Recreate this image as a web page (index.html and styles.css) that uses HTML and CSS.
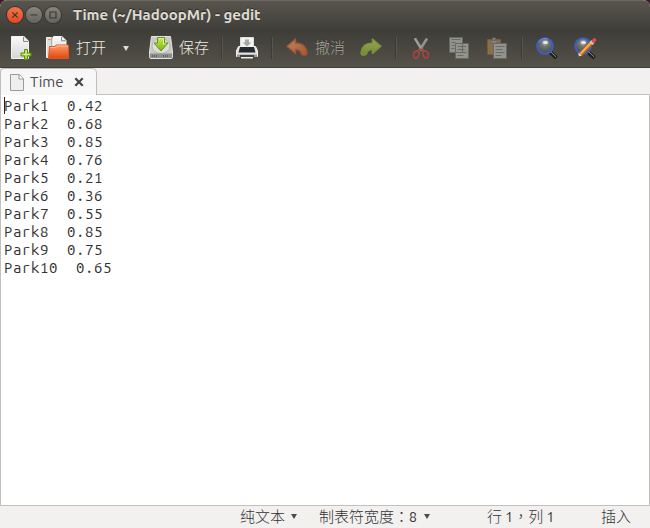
FILE: index.html
```
<!DOCTYPE html>
<html lang="zh-CN">
<head>
<meta charset="utf-8">
<title>Time (~/HadoopMr) - gedit</title>
<link rel="stylesheet" href="styles.css">
</head>
<body>
<svg class="defs" width="0" height="0">
  <defs>
    <linearGradient id="paper" x2="0" y2="1"><stop stop-color="#fafafa"/><stop offset="1" stop-color="#d5d5d3"/></linearGradient>
    <linearGradient id="folder" x2="0" y2="1"><stop stop-color="#f7a06c"/><stop offset=".45" stop-color="#f1763d"/><stop offset="1" stop-color="#df4711"/></linearGradient>
    <linearGradient id="green" x2="0" y2="1"><stop stop-color="#c9e95a"/><stop offset="1" stop-color="#79b414"/></linearGradient>
    <linearGradient id="undo" x2="1" y2="1"><stop stop-color="#b18a62"/><stop offset="1" stop-color="#ad5430"/></linearGradient>
    <linearGradient id="redo" x2="0" y2="1"><stop stop-color="#98a855"/><stop offset="1" stop-color="#708b32"/></linearGradient>
    <radialGradient id="lens" cx=".5" cy=".28" r=".75"><stop stop-color="#b8bbb9"/><stop offset=".35" stop-color="#70736f"/><stop offset="1" stop-color="#454a49"/></radialGradient>
  </defs>
</svg>
<div class="window">
  <header class="titlebar">
    <span class="control close"><svg viewBox="0 0 16 16"><path d="M5.3 5.3l5.4 5.4M10.7 5.3l-5.4 5.4"/></svg></span>
    <span class="control"><svg viewBox="0 0 16 16"><path d="M4.5 8h7"/></svg></span>
    <span class="control"><svg viewBox="0 0 16 16"><path d="M5 5h6v6H5z"/></svg></span>
    <h1>Time (~/HadoopMr) - gedit</h1>
  </header>
  <nav class="toolbar">
    <svg class="icon new" viewBox="0 0 24 24"><path d="M1.5.5h12.4l4.6 4.6v17.400h-17z" fill="url(#paper)" stroke="#f3f3f1"/><path d="M13.500.8v4.700h4.700" fill="#eee" stroke="#888"/><path d="M14.500 13.500h3v3.500h3.500v3h-3.500v3.500h-3v-3.500H11v-3h3.500z" fill="url(#green)" stroke="#5b8d13"/><path d="M16 14.500v8M12 18.500h8" stroke="#d9ed86"/></svg>
    <svg class="icon open" viewBox="0 0 28 24"><path d="M1.500 1.500h6v20h-6z" fill="#ddd" stroke="#f4f4f2"/><path d="M3 3.500h4" stroke="#f29b43"/><path d="M6.500 1.500h10v18h-10z" fill="#e5e5e3" stroke="#aaa"/><path d="M8.500.5h8.500l4 4v15H8.500z" fill="url(#paper)" stroke="#f5f5f3"/><path d="M16.500 .8v4h4.200" fill="none" stroke="#858585"/><path d="M4.500 10.500h5l2-1.500h12v13.500h-20z" fill="url(#folder)" stroke="#e4541b"/><path d="M5.300 11.500h4.900l2-1.500h10.500" fill="none" stroke="#ffc09a"/></svg>
    <span class="label">打开</span>
    <span class="drop"></span>
    <svg class="icon save" viewBox="0 0 26 24"><path d="M3.500.5h19l2 15.500v5q0 1.500-1.500 1.500H3q-1.500 0-1.500-1.500v-5z" fill="#c9c9c7" stroke="#e4e4e2"/><ellipse cx="13" cy="10" rx="9" ry="7.500" fill="#dededc" stroke="#b4b4b2"/><path d="M1.800 17.500h22.400v4.500H1.800z" fill="#8f8f8d"/><path d="M4 20h6M15 20h6" stroke="#555" stroke-width="1.500" stroke-dasharray="1 1"/><path d="M9.500 1.500h7V7H20l-7 8-7-8h3.500z" fill="url(#green)" stroke="#629316"/><path d="M10.500 2.500h5v5.500h2.200" fill="none" stroke="#dff094"/></svg>
    <span class="label">保存</span>
    <i class="separator s1"></i>
    <svg class="icon print" viewBox="0 0 24 24"><path d="M5.500 1.500h13v12h-13z" fill="#f3f3f1" stroke="#ddd"/><path d="M10 3.500h4v3h2.500L12 10.500 7.500 6.500H10z" fill="#a8a8a6"/><path d="M3.500 10.500h17l2 4v6h-21v-6z" fill="#e3e3e1" stroke="#f0f0ee"/><path d="M5 11h14l1.500 5.500h-17z" fill="#252b2f"/><path d="M2 18.500h20V21H2z" fill="#999"/><path d="M5 19h14v4H5z" fill="#44433e"/><path d="M6 21h12v1.500H6z" fill="#eee"/></svg>
    <i class="separator s2"></i>
    <svg class="icon undo" viewBox="0 0 24 24"><path d="M10.500 3v4q10 0 11.500 9.500 0 3-3 2.500-2.500 0-3-2.500-1-3-5.500-3v4L2 10.300z" fill="url(#undo)" stroke="#a35535" stroke-width="1.400" stroke-linejoin="round"/></svg>
    <span class="label muted">撤消</span>
    <svg class="icon redo" viewBox="0 0 24 24"><path d="M13.500 3v4Q3.500 7 2 16.500q0 3 3 2.500 2.500 0 3-2.500 1-3 5.500-3v4l8.500-7.200z" fill="url(#redo)" stroke="#7c9140" stroke-width="1.400" stroke-linejoin="round"/></svg>
    <i class="separator s3"></i>
    <svg class="icon cut" viewBox="0 0 24 24"><path d="M6 2.500l7.500 12M18 2.500l-7.500 12" stroke="#92928e" stroke-width="2.600"/><path d="M5.500 2l7 11.500" stroke="#b0b0aa" stroke-width=".8"/><path d="M12 13l-3 2q-4-.5-4.500 4 .3 3.500 3 3 3-1 2.500-6.500M12 13l3 2q4-.5 4.500 4-.3 3.500-3 3-3-1-2.500-6.500" fill="none" stroke="#9e4542" stroke-width="1.900"/></svg>
    <svg class="icon copy" viewBox="0 0 24 24"><g fill="#92938d" stroke="#686962"><path d="M2.500 1.500h13v15h-13zM8.500 7.500h13v15h-13z"/></g><path d="M4.500 3.500h9M4.500 6.500h4M4.500 9.500h3M4.500 12.500h3M10.500 10.500h9M10.500 13.500h7M10.500 16.500h9M10.500 19.500h6" stroke="#696a65"/></svg>
    <svg class="icon paste" viewBox="0 0 24 24"><path d="M2.500 3.500h13v15h-13z" fill="#86704b" stroke="#7a5b34"/><path d="M6 4h6v3H6zM7.500 2h3v3h-3z" fill="#999a94" stroke="#62635d"/><path d="M8.500 7.500h13v15h-13z" fill="#92938d" stroke="#686962"/><path d="M10.500 10.500h9M10.500 13.500h7M10.500 16.500h9M10.500 19.500h6" stroke="#696a65"/></svg>
    <i class="separator s4"></i>
    <svg class="icon find" viewBox="0 0 24 24"><path d="M15 16l6.500 6" stroke="#22221f" stroke-width="4"/><path d="M16 16l5 4.800" stroke="#92928d" stroke-width="1"/><circle cx="10" cy="10" r="7.800" fill="url(#lens)" stroke="#3d5fc3" stroke-width="2"/><path d="M4 6q3-5 9-3" fill="none" stroke="#7c9ce0" stroke-width=".8"/><ellipse cx="10.500" cy="6.500" rx="2.500" ry="1.500" fill="#e9eae7"/></svg>
    <svg class="icon replace" viewBox="0 0 24 24"><path d="M15 16l6.500 6" stroke="#22221f" stroke-width="4"/><path d="M16 16l5 4.800" stroke="#92928d"/><circle cx="10" cy="10" r="7.800" fill="url(#lens)" stroke="#3d5fc3" stroke-width="2"/><ellipse cx="10.500" cy="6.500" rx="2.500" ry="1.500" fill="#e9eae7"/><path d="M7.500 18.500L19 6.500" stroke="#bd6815" stroke-width="4"/><path d="M7.500 17.800L18.500 6.300" stroke="#ffae4c" stroke-width="2"/><path d="M18 7.500l2-2" stroke="#c9c9c6" stroke-width="4"/><path d="M20.500 5l1-1" stroke="#e34b4b" stroke-width="3.600" stroke-linecap="round"/><path d="M5.700 16.800l-.7 3.700 3.800-.7z" fill="#f6dfbd"/><path d="M5 20.500l.4-1.500 1.300 1.200z" fill="#222"/></svg>
  </nav>
  <div class="tabs">
    <div class="tab">
      <svg class="document" viewBox="0 0 14 17"><path d="M.5.500h8.800l4.200 4.200v11.800H.5z" fill="#eee" stroke="#9a9a98"/><path d="M9 .8V5h4.200" fill="#fff" stroke="#9a9a98"/></svg>
      <span>Time</span>
      <svg class="tab-close" viewBox="0 0 10 10"><path d="M1.300 1.300l7.400 7.400M8.700 1.300L1.300 8.700"/></svg>
    </div>
  </div>
  <main class="editor"><pre>Park1  0.42
Park2  0.68
Park3  0.85
Park4  0.76
Park5  0.21
Park6  0.36
Park7  0.55
Park8  0.85
Park9  0.75
Park10  0.65</pre></main>
  <footer class="statusbar">
    <span class="syntax">纯文本</span><i class="status-drop"></i>
    <span class="tabwidth">制表符宽度<span lang="zh-TW">：</span><b>8</b></span><i class="status-drop"></i>
    <span class="position">行 <b>1</b><span lang="zh-TW">，</span>列 <b>1</b></span>
    <span class="mode">插入</span>
  </footer>
</div>
</body>
</html>
```
FILE: styles.css
```
* { box-sizing: border-box; }
body { margin: 0; background: #3b1730; font-family: Ubuntu, "Noto Sans", "Noto Sans CJK SC", sans-serif; }
.defs { position: absolute; }
.window { width: 650px; height: 528px; display: flex; flex-direction: column; border-radius: 7px 7px 0 0; overflow: hidden; background: #f2f1f0; }
.titlebar { height: 29px; flex: none; display: flex; align-items: center; padding-left: 7px; gap: 3px; background: linear-gradient(#57554d, #403f3a); border-top: 1px solid #6b685f; }
.control { width: 16px; height: 16px; border-radius: 50%; background: linear-gradient(#87857d, #65635d); box-shadow: 0 0 0 1px #35342f; }
.control svg { display: block; fill: none; stroke: #393832; stroke-width: 1.2; }
.control.close { background: linear-gradient(#f4764b, #e4481b); }
h1 { margin: 0 0 0 9px; font-size: 15px; line-height: 20px; font-weight: 700; color: #dfdbd2; white-space: pre; text-shadow: 0 -1px #292824; }
.toolbar { height: 39px; flex: none; display: flex; align-items: center; padding-left: 9px; background: linear-gradient(#3d3c37, #55524a); border-bottom: 1px solid #403e38; }
.icon { width: 24px; height: 24px; flex: none; overflow: visible; }
.icon.new { margin-left: 1px; }
.icon.open { width: 28px; margin-left: 11px; }
.label { width: 30px; flex: none; margin: -2px 0 0 3px; color: #f0ece3; font-size: 15px; font-weight: 300; line-height: 20px; white-space: nowrap; font-family: "Noto Sans CJK SC", sans-serif; }
.label.muted { margin-left: 6px; color: #a5a399; text-shadow: 0 -1px #33322d; }
.drop { margin-left: 17px; border: 3.5px solid transparent; border-top: 5px solid #dfdbd2; border-bottom: 0; }
.icon.save { width: 26px; margin-left: 19px; }
.save + .label { margin-left: 5px; }
.separator { width: 2px; height: 22px; flex: none; border-left: 1px solid #3c3b36; border-right: 1px solid #57554e; }
.s1 { margin-left: 12px; }
.print { margin-left: 12px; }
.s2 { margin-left: 12px; }
.undo { margin-left: 12px; }
.redo { margin-left: 14px; }
.s3 { margin-left: 12px; }
.cut { margin-left: 12px; }
.copy { margin-left: 14px; }
.paste { margin-left: 14px; }
.s4 { margin-left: 12px; }
.find { margin-left: 12px; }
.replace { margin-left: 14px; }
.tabs { height: 27px; flex: none; display: flex; background: #f2f1f0; border-bottom: 1px solid #c5c2bf; }
.tab { width: 97px; height: 27px; display: flex; align-items: center; padding-left: 9px; border: 1px solid #c1beba; border-bottom: 0; border-radius: 4px 5px 0 0; background: #f7f7f7; color: #4c4c4c; font-size: 15px; line-height: 20px; }
.document { width: 14px; height: 17px; margin-right: 6px; }
.tab span { width: 34px; }
.tab-close { width: 10px; height: 10px; margin-left: 10px; stroke: #444; stroke-width: 2.2; }
.editor { flex: 1; background: #fff; border: 1px solid #c3bfbc; border-top: 0; padding: 2px 3px; }
pre { margin: 0; width: 130px; font: 15px/18px "Ubuntu Mono", "DejaVu Sans Mono", monospace; letter-spacing: .6px; color: #333; position: relative; }
pre::before { content: ""; position: absolute; left: 0; top: 0; width: 1px; height: 17px; background: #222; }
.statusbar { height: 22px; flex: none; display: flex; align-items: center; padding: 0 0 2px 240px; color: #333; font: 300 15px/20px "Noto Sans CJK SC", sans-serif; white-space: pre; }
.statusbar b { font: 400 14px/20px Ubuntu, "Noto Sans", sans-serif; }
.statusbar [lang] { font-family: "Noto Sans CJK TC", sans-serif; }
.syntax { width: 45px; }
.status-drop { margin-left: 6px; border: 3.5px solid transparent; border-top: 5px solid #4c4c4c; border-bottom: 0; }
.tabwidth { width: 99px; margin-left: 22px; }
.position { width: 70px; margin-left: 57px; }
.mode { margin-left: 44px; }
```
